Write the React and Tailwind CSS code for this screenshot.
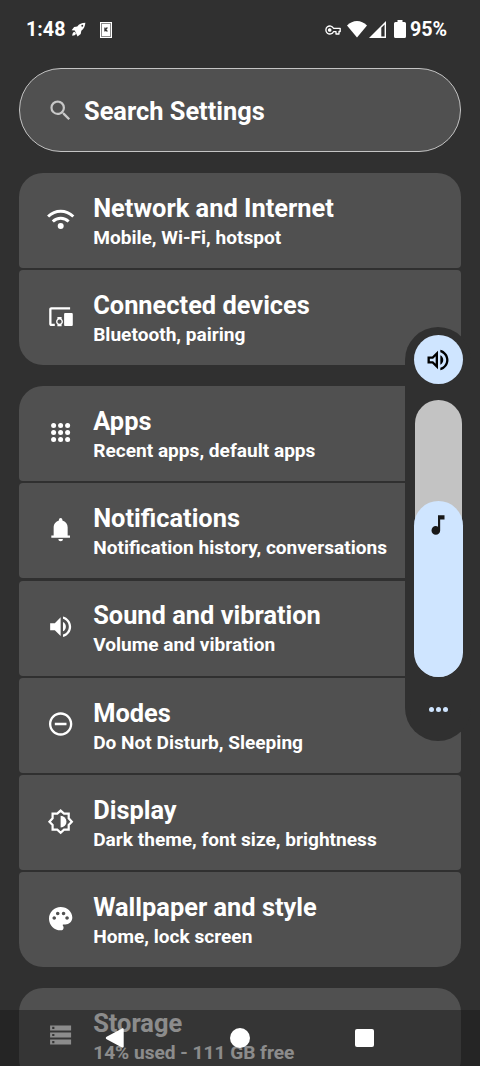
import React from "react";
import { MdSearch, MdVolumeUp, MdOutlineVolumeUp, MdRemoveCircleOutline, MdPalette, MdMusicNote } from "react-icons/md";

const WifiArcs = () => (
  <svg viewBox="0 0 28 28" className="size-7" fill="none" stroke="currentColor" strokeWidth="3">
    <path d="M1.100 11.500C4.700 8.100 9 6.300 13.700 6.300s9 1.800 12.600 5.200" />
    <path d="M5.800 16.500C8 14.400 10.700 13.300 13.700 13.300s5.700 1.100 7.900 3.200" />
    <circle cx="13.700" cy="20.900" r="3" fill="currentColor" stroke="none" />
  </svg>
);

const Devices = () => (
  <svg viewBox="0 0 28 28" className="size-7" fill="currentColor">
    <path d="M4.300 4.200h18.800v2.300H4.500v14.200h3.300v2.300H4.300c-1.200 0-2.100-.9-2.100-2.100V6.300c0-1.200.9-2.100 2.100-2.100z" />
    <path d="M18.400 10.100h6.100c.8 0 1.300.5 1.300 1.300v10.400c0 .8-.5 1.300-1.300 1.300h-6.100c-.8 0-1.300-.5-1.300-1.300V11.400c0-.8.5-1.300 1.300-1.300z" />
    <path fillRule="evenodd" d="M10.400 14h4.200v2.100c.8.700 1.300 1.500 1.300 2.600s-.5 1.900-1.300 2.600v1.900h-4.200v-1.900c-.8-.7-1.300-1.500-1.300-2.600s.5-1.900 1.300-2.600zM12.500 16.600a2.100 2.100 0 1 0 0 4.200 2.100 2.100 0 0 0 0-4.200z" />
  </svg>
);

const Dots = () => (
  <svg viewBox="0 0 28 28" className="size-7" fill="currentColor">
    {[6.6, 13.6, 20.6].map((y) => [6.6, 13.6, 20.6].map((x) => <circle key={`${x}-${y}`} cx={x} cy={y} r="2.5" />))}
  </svg>
);

const Bell = () => (
  <svg viewBox="0.300 0.300 24 24" className="size-7" fill="currentColor">
    <path d="M4 19v-2h2v-7c0-1.380.42-2.610 1.250-3.690A5.900 5.900 0 0 1 10.500 4.200v-.7a1.500 1.500 0 0 1 3 0v.7a5.900 5.900 0 0 1 3.250 2.110A5.900 5.900 0 0 1 18 10v7h2v2zM12 22a2 2 0 0 1-2-2h4a2 2 0 0 1-2 2z" />
  </svg>
);

const Brightness = () => (
  <svg viewBox="0.300 0.300 24 24" className="size-7">
    <path d="M12 2.500L14.900 5.100H18.900V9.100L21.600 12L18.900 14.900V18.900H14.900L12 21.500L9.100 18.900H5.100V14.900L2.400 12L5.100 9.100V5.100H9.100Z" fill="none" stroke="currentColor" strokeWidth="1.900" />
    <path d="M12 7v10a5 5 0 0 0 0-10z" fill="currentColor" />
  </svg>
);

const Storage = () => (
  <svg viewBox="0.400 0.400 28 28" className="size-7" fill="currentColor" fillRule="evenodd">
    <path d="M3.500 4.800h21v5h-21zM5.600 6.200v2.200h2.200V6.200zM3.500 11.900h21v5h-21zM5.600 13.300v2.200h2.200v-2.200zM3.500 19h21v5h-21zM5.600 20.400v2.200h2.200v-2.200z" />
  </svg>
);

const groups = [
  [
    { title: "Network and Internet", sub: "Mobile, Wi-Fi, hotspot", icon: <WifiArcs /> },
    { title: "Connected devices", sub: "Bluetooth, pairing", icon: <Devices /> },
  ],
  [
    { title: "Apps", sub: "Recent apps, default apps", icon: <Dots /> },
    { title: "Notifications", sub: "Notification history, conversations", icon: <Bell /> },
    { title: "Sound and vibration", sub: "Volume and vibration", icon: <MdVolumeUp className="size-7" viewBox="0.300 0.300 24 24" /> },
    { title: "Modes", sub: "Do Not Disturb, Sleeping", icon: <MdRemoveCircleOutline className="size-7" viewBox="0.300 0 24 24" /> },
    { title: "Display", sub: "Dark theme, font size, brightness", icon: <Brightness /> },
    { title: "Wallpaper and style", sub: "Home, lock screen", icon: <MdPalette className="size-7" viewBox="0.300 0.300 24 24" /> },
  ],
  [{ title: "Storage", sub: "14% used - 111 GB free", icon: <Storage /> }],
];

function Row({ item }) {
  return (
    <div className="flex h-[94.900px] shrink-0 items-center rounded-[4px] bg-[#505050] pl-7">
      <div className="mb-[2px] shrink-0">{item.icon}</div>
      <div className="ml-[18.200px] whitespace-nowrap pt-[3.500px]">
        <div className="text-[25.400px] leading-[31px]">{item.title}</div>
        <div className="text-[19.100px] leading-[28px]">{item.sub}</div>
      </div>
    </div>
  );
}

function StatusBar() {
  return (
    <header className="flex h-[68px] shrink-0 items-start pl-[26px] pr-[34px] pt-[17px] text-[19.700px] leading-[26px]">
      <span className="w-[38px]">1:48</span>
      <svg viewBox="0 0 24 24" className="ml-[7px] mt-[5px] size-[15px]" fill="currentColor">
        <path d="M23 1c-6 0-10 2-13 6L5 8 1 13l5 .5L8 18l2.500 5 5-4 1-5c4-3 6-7 6.500-13zM5.500 15.500C3 16 2 19 2 22c3 0 5.500-1 6-3.500z" />
        <circle cx="18" cy="6" r="1.500" fill="#303030" />
      </svg>
      <svg viewBox="0 0 12 16" className="ml-[14px] mt-[5px] h-4 w-3">
        <rect x=".5" y=".5" width="11" height="15" fill="#8a8a8a" stroke="#fff" />
        <rect x="2" y="2" width="8" height="12" fill="#fff" />
        <path d="M4.900 5.500v4M7.400 5.500 5.500 7.500l1.900 2" stroke="#333" strokeWidth="1.200" fill="none" />
      </svg>
      <div className="flex-1" />
      <svg viewBox="0 0 16 10" className="mt-[8px] h-[10px] w-4" fill="none" stroke="currentColor" strokeWidth="1.300">
        <path d="M8.500 3.300H15.200V6.500H14V9H11V6.700H8.500A4 4 0 1 1 8.500 3.300Z" strokeLinejoin="round" />
        <circle cx="4.700" cy="5" r="1.200" fill="currentColor" />
      </svg>
      <svg viewBox="0 0 20 17" className="ml-[6px] mt-[4px] h-[17px] w-5" fill="currentColor">
        <path d="M0 4.500C3 1.500 6.300 0 10 0s7 1.500 10 4.500L10 16.500z" />
      </svg>
      <svg viewBox="0 0 17 17" className="ml-[2px] mt-[4px] size-[17px]" fill="currentColor" fillRule="evenodd">
        <path d="M17 0v17H0zM15.600 3.500 12.300 6.800V15.600H15.600z" />
      </svg>
      <svg viewBox="0 0 12 18" className="ml-[8px] mt-[3px] h-[18px] w-3" fill="currentColor">
        <path d="M3.500 0h5v2h2a1.500 1.500 0 0 1 1.500 1.500v13a1.500 1.500 0 0 1-1.500 1.500h-9A1.500 1.500 0 0 1 0 16.500v-13A1.500 1.500 0 0 1 1.500 2h2z" />
      </svg>
      <span className="ml-[4px] w-[36px]">95%</span>
    </header>
  );
}

function VolumePanel() {
  return (
    <aside className="absolute left-[405px] top-[327px] flex h-[414px] w-[66px] flex-col items-center rounded-full bg-[#303030] pt-[8px]">
      <div className="flex size-[49px] shrink-0 items-center justify-center rounded-full bg-[#cfe5ff] text-black">
        <MdOutlineVolumeUp className="size-[28px]" />
      </div>
      <div className="mt-[16px] flex h-[276.500px] w-[47px] shrink-0 flex-col items-center justify-end rounded-full bg-[#c3c3c3]">
        <div className="flex h-[176px] w-[49px] shrink-0 justify-center rounded-full bg-[#cfe5ff] pt-[11px] text-[#181818]">
          <MdMusicNote className="size-[26px]" />
        </div>
      </div>
      <div className="mt-[30px] flex gap-[2px]">
        <i className="size-[5px] rounded-full bg-[#cfe5ff]" />
        <i className="size-[5px] rounded-full bg-[#cfe5ff]" />
        <i className="size-[5px] rounded-full bg-[#cfe5ff]" />
      </div>
    </aside>
  );
}

function NavBar() {
  return (
    <nav className="absolute inset-x-0 bottom-0 flex h-14 items-center bg-[#1a1a1a]/50 pl-[105px]">
      <svg viewBox="0 0 20 20" className="size-5" fill="#fff">
        <path d="M17 .4 1.600 8.800a1.300 1.300 0 0 0 0 2.400L17 19.600c.9.400 1.700 0 1.700-1V1.400c0-1-.8-1.400-1.700-1z" />
      </svg>
      <div className="ml-[104.500px] size-5 rounded-full bg-white" />
      <div className="ml-[105.500px] size-[18.500px] rounded-[2px] bg-white" />
    </nav>
  );
}

export default function App() {
  return (
    <div className="relative flex h-[1066px] w-[480px] flex-col overflow-hidden bg-[#303030] font-['Roboto',sans-serif] font-bold text-white">
      <StatusBar />
      <div className="mx-[19px] flex h-[84px] shrink-0 items-center rounded-full border border-[#c4c4c4] bg-[#505050] pl-[27px]">
        <MdSearch className="size-[27px] text-[#c8c8c8]" />
        <span className="ml-[10px] pt-[2px] text-[25.400px] leading-[31px]">Search Settings</span>
      </div>
      <main className="mx-[19px] mt-[21px] flex flex-col gap-[21.100px]">
        {groups.map((items, i) => (
          <section key={i} className="flex shrink-0 flex-col gap-[2.350px] overflow-hidden rounded-[24px]">
            {items.map((item) => (
              <Row key={item.title} item={item} />
            ))}
          </section>
        ))}
      </main>
      <NavBar />
      <VolumePanel />
    </div>
  );
}
